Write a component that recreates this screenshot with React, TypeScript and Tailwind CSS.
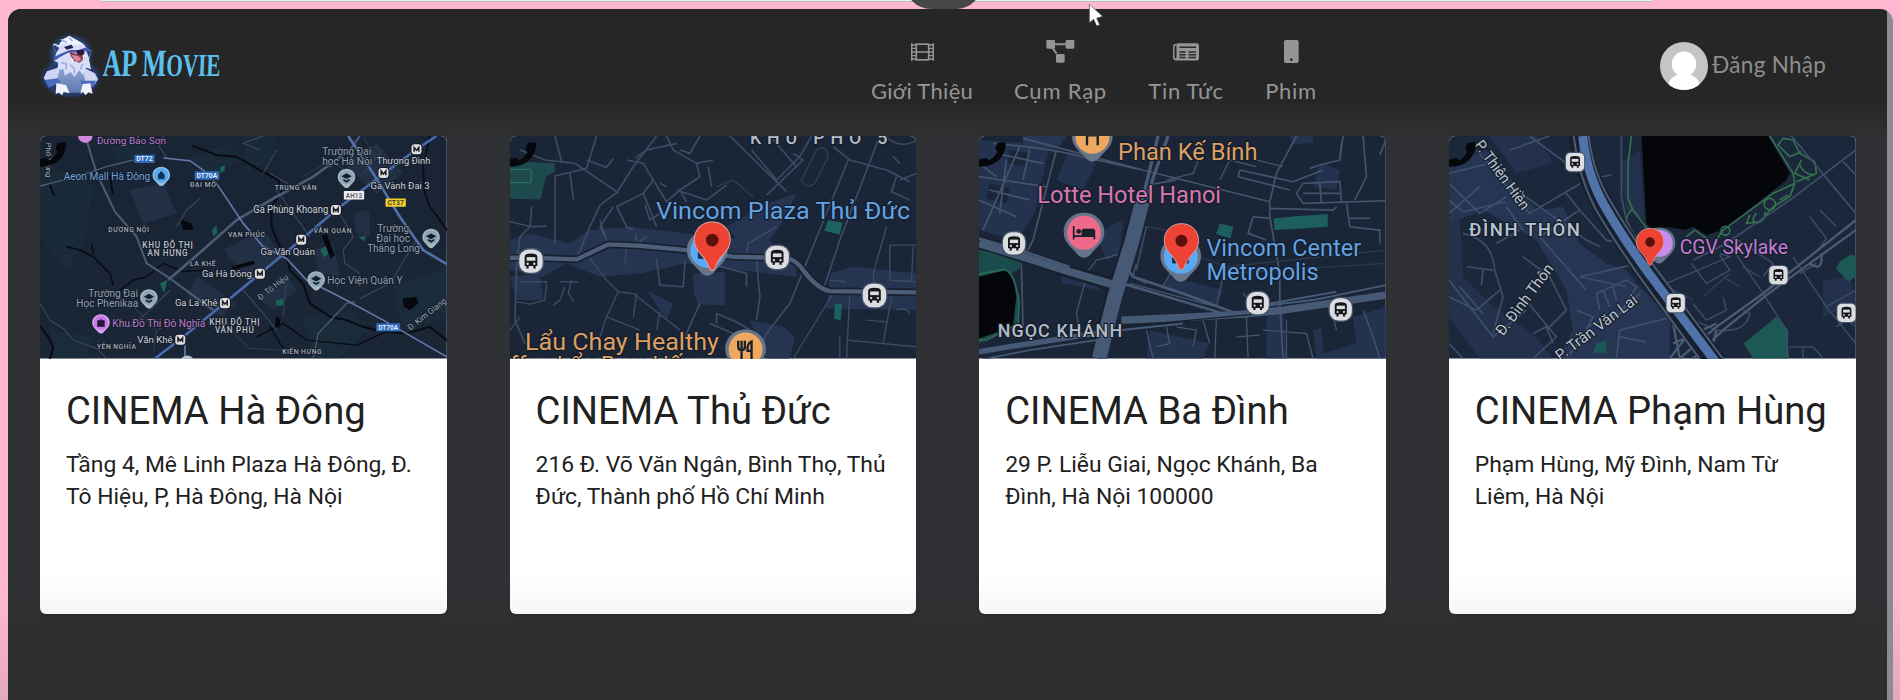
import React from "react";

type LabelProps = {
  x: number;
  y: number;
  s: number;
  c: string;
  w?: number;
  r?: number;
  bold?: boolean;
  children: string;
};

function Label({ x, y, s, c, w, r, bold, children }: LabelProps) {
  return (
    <text
      x={x}
      y={y}
      fontSize={s * 1.07}
      fill={c}
      textLength={w}
      lengthAdjust={bold ? "spacing" : "spacingAndGlyphs"}
      fontWeight={bold ? 500 : 400}
      stroke="#141d2b"
      strokeWidth={s > 40 ? 7 : 5}
      strokeLinejoin="round"
      paintOrder="stroke"
      transform={r ? `rotate(${r} ${x} ${y})` : undefined}
    >
      {children}
    </text>
  );
}

function Bus({ x, y, k = 1, square }: { x: number; y: number; k?: number; square?: boolean }) {
  return (
    <g transform={`translate(${x} ${y}) scale(${k})`}>
      <rect x="-39" y="-39" width="78" height="78" rx={square ? 20 : 32} fill="#46536a" />
      <rect x="-35" y="-35" width="70" height="70" rx={square ? 17 : 28} fill="#dcdde0" />
      <path d="M-19 -14Q-19 -23 0 -23Q19 -23 19 -14V15H14V22H7V15H-7V22H-14V15H-19Z" fill="#15171b" />
      <rect x="-13" y="-12" width="26" height="11" fill="#dcdde0" />
      <circle cx="-10" cy="8" r="3.5" fill="#dcdde0" />
      <circle cx="10" cy="8" r="3.5" fill="#dcdde0" />
    </g>
  );
}

function Metro({ x, y }: { x: number; y: number }) {
  return (
    <g transform={`translate(${x} ${y})`}>
      <rect x="-18" y="-18" width="36" height="36" rx="11" fill="#141a24" />
      <rect x="-15" y="-15" width="30" height="30" rx="9" fill="#dedede" />
      <path d="M-7 7V-6L0 3L7 -6V7" fill="none" stroke="#1c1f26" strokeWidth="4.5" />
    </g>
  );
}

function Pin({ x, y, k = 1, c, rim = "#66758a", children }: { x: number; y: number; k?: number; c: string; rim?: string; children?: React.ReactNode }) {
  return (
    <g transform={`translate(${x} ${y}) scale(${k})`}>
      <path d="M0 -60C35 -60 61 -34 61 -2C61 30 38 43 22 62Q0 88 -22 62C-38 43 -61 30 -61 -2C-61 -34 -35 -60 0 -60Z" fill={rim} />
      <circle r="51" fill={c} />
      {children}
    </g>
  );
}

function RedPin({ x, y, k = 1 }: { x: number; y: number; k?: number }) {
  return (
    <g transform={`translate(${x} ${y}) scale(${k})`}>
      <path
        d="M0 -54C32 -54 54 -31 54 -1C54 29 34 39 20 60C11 74 8 92 0 92C-8 92 -11 74 -20 60C-34 39 -54 29 -54 -1C-54 -31 -32 -54 0 -54Z"
        fill="#ed4335"
        stroke="#d9a5a3"
        strokeWidth="3"
      />
      <circle r="19" fill="#5c100c" />
    </g>
  );
}

function School({ x, y }: { x: number; y: number }) {
  return (
    <Pin x={x} y={y} k={0.43} c="#8fa6b5" rim="#a9bac4">
      <path d="M-36 -8L0 -28L36 -8L0 12ZM-22 10L0 22L22 10V24L0 37L-22 24Z" fill="#12202c" />
    </Pin>
  );
}

function Badge({ x, y, w, bg, fg, children }: { x: number; y: number; w: number; bg: string; fg: string; children: string }) {
  return (
    <g>
      <rect x={x} y={y} width={w} height="25" rx="2" fill={bg} />
      <text x={x + w / 2} y={y + 20} fontSize="21" fontWeight="600" textAnchor="middle" fill={fg} textLength={w - 12} lengthAdjust="spacingAndGlyphs">
        {children}
      </text>
    </g>
  );
}

function Handset() {
  return (
    <path
      d="M82 40L104 36Q109 37 108 48Q105 75 84 94Q62 110 34 110H24V90Q40 84 50 84L58 91Q73 84 83 65L77 57Z"
      fill="#05070a"
    />
  );
}

const mapClass = "block h-[222.500px] w-full";
const mapFont = "Roboto, 'Noto Sans', sans-serif";

function MapHaDong() {
  return (
    <svg className={mapClass} viewBox="30 18 1221 667" preserveAspectRatio="none" fontFamily={mapFont}>
      <rect x="30" y="18" width="1221" height="667" fill="#1a2536" />
      <g fill="#1a3a40" opacity=".3">
        <path d="M30 90L190 170L165 330L110 420L30 320ZM640 18H740L720 90L650 130ZM60 600L190 620L170 685H70ZM820 560L960 540L1010 600L930 685H850ZM470 90L590 40L640 80L560 140Z" />
        <path d="M1090 470L1251 410V560L1120 600ZM240 40L370 30L380 80L260 90Z" />
      </g>
      <g fill="#26344c" opacity=".75">
        <path d="M580 360L700 300L760 380L660 450ZM500 440L620 520L570 560L470 500ZM940 100L1040 40L1120 130L1040 190ZM970 250L1020 240L1020 320L980 310ZM850 360L910 340L930 440L870 430ZM300 180L400 160L440 250L340 280ZM680 500L770 430L800 480L730 540Z" />
      </g>
      <g fill="#1b6258">
        <path d="M545 300L560 285L562 310L550 318ZM870 360L892 345L900 365L884 382ZM390 460L412 450L402 490ZM570 112L585 106L584 124L572 128ZM738 510L762 506L760 525L740 528ZM985 320L1008 318L1004 334Z" />
      </g>
      <g fill="none" stroke="#080b12" strokeWidth="6" strokeLinecap="round">
        <path d="M490 48L560 75L620 80L690 120L745 150L755 185L725 230V290L745 340L770 380L780 420L820 460L840 520L900 560L950 570L1000 590L1040 600L1130 610L1200 590L1251 630" />
        <path d="M110 350L150 360L190 380L240 430L250 465M185 345L190 370" strokeWidth="5" />
        <path d="M520 420L460 425L400 400L375 420L350 440L310 450L270 480" strokeWidth="4" />
        <path d="M1200 18L1180 110L1185 190L1200 230L1230 270L1251 300" strokeWidth="5" />
        <path d="M32 590L55 620L70 650L60 685M240 140L248 190M60 165L72 195" />
        <path d="M680 620L760 580L830 630L980 645L1080 600M720 590L770 670" strokeWidth="4" />
      </g>
      <g fill="#06080d">
        <path d="M450 268L485 280L490 300L460 300ZM605 410L670 392L675 402L610 420ZM876 318L890 312L915 375L902 385ZM738 560L752 565L748 592L736 590ZM1118 505L1160 500L1165 520L1140 540L1122 530Z" />
      </g>
      <g fill="none" stroke="#3e4c65" strokeWidth="3">
        <path d="M30 520L60 570L100 595L130 630L200 655L230 685M640 480L700 550L740 600M930 250L970 320L940 360L945 400L990 430M1160 330L1080 460L990 505M720 130L790 170M740 180L840 320M400 18L388 50L412 85M700 18L640 40L690 60M740 60L700 130M510 205L470 240L440 290M300 590L360 540L420 480" />
        <path d="M1060 60L1000 130M820 140L900 90L960 130M1000 20L1040 90M770 450L760 560M570 545L620 620L660 655L850 665M300 520L380 600L370 660" strokeWidth="2" />
      </g>
      <g fill="none" stroke="#4c5b76" strokeWidth="6">
        <path d="M170 30L200 130L255 245L320 320L350 400L420 445L550 540" />
        <path d="M30 168L140 140L230 110L310 90M850 685L865 610L950 520L975 515" strokeWidth="4" />
        <path d="M415 450L530 350L620 270L740 200L850 140L960 60" strokeWidth="8" />
        <path d="M960 60L990 18" />
      </g>
      <g fill="none" stroke="#6478ab" strokeWidth="5">
        <path d="M400 84L480 92L540 135L570 175L640 280L700 350L770 385L830 450L930 500L1060 570L1251 680" />
        <path d="M375 685L450 628L585 518L690 431L814 329L918 240L1030 155L1160 58L1220 18" stroke="#4a69ad" strokeWidth="8" />
        <path d="M955 18L1030 130L1110 260L1180 360L1251 402" stroke="#5070a8" strokeWidth="8" />
        <path d="M465 620V685" />
      </g>
      <Badge x={313} y={74} w={61} bg="#2d6ab8" fg="#eaf2ff">DT72</Badge>
      <Badge x={494} y={124} w={74} bg="#2d6ab8" fg="#eaf2ff">DT70A</Badge>
      <Badge x={1039} y={579} w={72} bg="#2d6ab8" fg="#eaf2ff">DT70A</Badge>
      <Badge x={942} y={183} w={61} bg="#eeeeee" fg="#555b66">AH13</Badge>
      <Badge x={1067} y={205} w={61} bg="#efcf30" fg="#3b3820">CT37</Badge>
      <Label x={200} y={41} s={27} w={208} c="#bd7bc9">Đường Bảo Sơn</Label>
      <Label x={101} y={150} s={28} w={260} c="#6ba4da">Aeon Mall Hà Đông</Label>
      <Label x={480} y={171} s={19} w={78} bold c="#a8afb8">ĐẠI MỖ</Label>
      <Label x={735} y={181} s={19} w={125} bold c="#a8afb8">TRUNG VĂN</Label>
      <Label x={235} y={306} s={19} w={122} bold c="#a8afb8">DƯƠNG NỘI</Label>
      <Label x={594} y={322} s={19} w={111} bold c="#a8afb8">VẠN PHÚC</Label>
      <Label x={851} y={309} s={19} w={114} bold c="#a8afb8">VĂN QUÁN</Label>
      <Label x={337} y={355} s={23} w={152} bold c="#bcc1c8">KHU ĐÔ THỊ</Label>
      <Label x={353} y={378} s={23} w={120} bold c="#bcc1c8">AN HƯNG</Label>
      <Label x={480} y={409} s={19} w={77} bold c="#a8afb8">LA KHÊ</Label>
      <Label x={538} y={584} s={23} w={151} bold c="#bcc1c8">KHU ĐÔ THỊ</Label>
      <Label x={555} y={608} s={23} w={117} bold c="#bcc1c8">VĂN PHÚ</Label>
      <Label x={201} y={657} s={19} w={117} bold c="#a8afb8">YÊN NGHĨA</Label>
      <Label x={757} y={671} s={19} w={118} bold c="#a8afb8">KIẾN HƯNG</Label>
      <Label x={877} y={74} s={28} w={147} c="#929fac">Trường Đại</Label>
      <Label x={877} y={104} s={28} w={150} c="#929fac">học Hà Nội</Label>
      <Label x={1041} y={103} s={27} w={161} c="#d0d3d7">Thượng Đình</Label>
      <Label x={1022} y={177} s={27} w={177} c="#d0d3d7">Ga Vành Đai 3</Label>
      <Label x={670} y={250} s={28} w={225} c="#d0d3d7">Ga Phùng Khoang</Label>
      <Label x={692} y={375} s={27} w={163} c="#d0d3d7">Ga Văn Quán</Label>
      <Label x={516} y={440} s={27} w={150} c="#d0d3d7">Ga Hà Đông</Label>
      <Label x={435} y={529} s={27} w={128} c="#d0d3d7">Ga La Khê</Label>
      <Label x={322} y={638} s={27} w={106} c="#d0d3d7">Văn Khê</Label>
      <Label x={1042} y={306} s={28} w={96} c="#929fac">Trường</Label>
      <Label x={1039} y={336} s={28} w={102} c="#929fac">Đại học</Label>
      <Label x={1012} y={367} s={28} w={158} c="#929fac">Thăng Long</Label>
      <Label x={892} y={462} s={28} w={226} c="#929fac">Học Viện Quân Y</Label>
      <Label x={175} y={501} s={28} w={149} c="#929fac">Trường Đại</Label>
      <Label x={139} y={532} s={28} w={186} c="#929fac">Học Phenikaa</Label>
      <Label x={247} y={590} s={28} w={279} c="#bd7bc9">Khu Đô Thị Đô Nghĩa</Label>
      <Label x={692} y={512} s={24} w={108} r={-38} c="#9aa6b4">Đ. Tô Hiệu</Label>
      <Label x={1141} y={602} s={24} w={140} r={-38} c="#9aa6b4">Đ. Kim Giang</Label>
      <Label x={48} y={38} s={22} w={104} r={90} c="#aab0b8">Phố Trung</Label>
      <Metro x={1160} y={58} />
      <Metro x={1061} y={129} />
      <Metro x={918} y={240} />
      <Metro x={814} y={329} />
      <Metro x={690} y={431} />
      <Metro x={585} y={519} />
      <Metro x={451} y={629} />
      <School x={950} y={142} />
      <School x={1204} y={322} />
      <School x={859} y={449} />
      <School x={357} y={503} />
      <Pin x={394} y={136} k={0.43} c="#5aa8ec" rim="#8fc0ea">
        <path d="M-20 -8H20V24H-20ZM-11 -8Q-11 -25 0 -25Q11 -25 11 -8" fill="#12304f" stroke="#12304f" strokeWidth="6" />
      </Pin>
      <Pin x={213} y={578} k={0.43} c="#c67bea" rim="#d9a6ee">
        <path d="M-22 -14H22V24H-22ZM0 -30V-10" fill="#2b1238" stroke="#2b1238" strokeWidth="7" />
      </Pin>
      <circle cx="166" cy="17" r="22" fill="#cf86dd" />
      <circle cx="472" cy="697" r="21" fill="#b6c4d2" />
      <Handset />
    </svg>
  );
}

function MapThuDuc() {
  return (
    <svg className={mapClass} viewBox="30 18 1221 667" preserveAspectRatio="none" fontFamily={mapFont}>
      <rect x="30" y="18" width="1221" height="667" fill="#1a2537" />
      <g fill="#253551">
        <path d="M30 330L90 310L210 340L270 300L390 290L560 310L660 320L810 330L840 370L890 400V440L800 430L560 400L420 430L300 440L200 400L130 440L30 420Z" />
        <path d="M580 430L675 425V525L595 522L582 490ZM680 290L800 220L890 190L840 290L800 340L720 340ZM750 570L850 590L885 620L870 685H800ZM990 430L1060 410L1251 430V540L980 535ZM30 440L120 430L130 510L50 510ZM440 480L520 520L500 570Z" />
      </g>
      <g fill="#1c4a4d">
        <path d="M30 92L165 100V125L138 140L122 208L30 206Z" />
        <path d="M985 270L1028 278L1020 313L973 302ZM1005 520L1027 522L1022 570L1003 566Z" fill="#1c6260" />
      </g>
      <rect x="28" y="118" width="66" height="40" rx="8" fill="none" stroke="#2d6f6b" strokeWidth="4" />
      <g fill="none" stroke="#3e4b64" strokeWidth="5" strokeLinejoin="round">
        <path d="M60 60L135 90L225 100L355 188M165 18L185 95M290 18L260 115L165 138V340M260 90L320 112L340 85M210 130L220 208M470 18L400 110L350 188L300 225L270 290L230 385M380 90L430 100L460 150L430 190L350 230L380 290L400 300" />
        <path d="M405 85L440 60L530 40M500 18L520 60L590 100L600 140L540 180L560 215M530 180L620 210L680 165M600 18L570 70L540 60M625 110L635 170M640 90L590 100M460 150L500 215L540 180M430 190L470 290M435 225L450 270L480 250M480 160L500 170M340 230L300 290L320 330L300 270M410 310L405 345L440 320" />
        <path d="M690 18L860 185M755 60L830 150L900 80L935 18M810 18L890 110M880 70L910 90L800 195M1045 90L870 520L800 610L770 685M1140 18L1020 330L970 480M1000 50L1050 90L1160 120L1230 155M1190 140L1175 185L1230 210M1200 150L1251 130M1180 80L1200 100" />
        <path d="M30 275L95 290L140 288M95 230L90 290L60 320L50 400L45 570L75 640M470 385L480 465L550 470L555 395M570 385L740 430L740 470M740 370L745 340L830 290M770 390L780 500L770 570M630 580L770 640M650 550L720 580L780 620M650 550V580M600 520L555 620" />
        <path d="M60 455H140L135 510L90 522L50 515M215 450L205 490L222 515M195 470L180 510L160 525M235 455H180M270 385L320 450L355 485L320 560L300 620M350 485L400 490L540 600M410 490L400 560M480 545L470 600M320 560L420 600M380 350L375 400M1160 290L1120 430L1125 480M1170 345H1251M1170 345V450L1251 455M1240 350L1235 455M990 450L1040 455M1000 490L880 685M1050 490L1040 685M1175 500L1150 640M1040 630L1251 650M1100 570L1160 575M1190 540Q1220 530 1230 550M1020 620V685M30 600L60 560" strokeWidth="4" />
        <path d="M905 150L950 60Q980 40 985 80L945 160Q920 180 905 150ZM650 170L700 150L760 200M370 400L390 420" stroke="#303d54" strokeWidth="4" />
        <path d="M1160 20Q1200 60 1251 30" strokeWidth="4" />
      </g>
      <path d="M30 383H90L230 388L325 343L420 347L560 360L700 380L860 384Q890 390 910 420Q950 475 990 483L1251 487" fill="none" stroke="#18202e" strokeWidth="23" />
      <path d="M30 383H90L230 388L325 343L420 347L560 360L700 380L860 384Q890 390 910 420Q950 475 990 483L1251 487" fill="none" stroke="#4d5e79" strokeWidth="13" />
      <Bus x={93} y={393} />
      <Bus x={832} y={382} />
      <Bus x={1124} y={496} />
      <Label x={750} y={42} s={50} w={413} bold c="#b4bac3">KHU PHỐ 5</Label>
      <Label x={468} y={267} s={68} w={763} c="#63a3e2">Vincom Plaza Thủ Đức</Label>
      <Pin x={622} y={362} c="#5aa9f5">
        <path d="M-28 -6H26V24H-28Z" fill="#15304f" />
      </Pin>
      <RedPin x={637} y={330} />
      <Pin x={737} y={658} c="#eea85f">
        <path d="M-22 -26V-8Q-22 2 -12 3V34M-12 -26V0M-2 -26V-8Q-2 2 -12 3M18 34V-24Q4 -18 6 4H18" fill="none" stroke="#18202c" strokeWidth="7" />
      </Pin>
      <Label x={75} y={659} s={66} w={582} c="#dda062">Lẩu Chay Healthy</Label>
      <Label x={30} y={728} s={66} w={555} c="#dda062">ffee Lẩu Bow Hấp</Label>
      <Handset />
    </svg>
  );
}

function MapBaDinh() {
  return (
    <svg className={mapClass} viewBox="28 18 1220 667" preserveAspectRatio="none" fontFamily={mapFont}>
      <rect x="28" y="18" width="1220" height="667" fill="#1a2537" />
      <g fill="#263755">
        <path d="M28 30L240 45L195 250L140 330L28 300ZM300 60L380 100L340 180L260 150ZM380 310L460 270L450 370L410 390ZM270 430L350 415L390 480L280 460ZM600 440L760 480L735 530L575 475ZM890 560L940 540L950 685H890ZM1030 600L1248 530V685H1040ZM540 600L720 640L700 685H530ZM960 18H1030V40L970 42ZM1050 100L1110 120L1100 180L1030 170Z" opacity=".8" />
        <path d="M160 18H290L260 60L160 45Z" />
      </g>
      <g fill="#1a2537">
        <path d="M1055 580L1150 565L1160 640L1060 670ZM120 60L180 70L170 110L115 100ZM60 160L120 175L110 220L50 205Z" />
      </g>
      <path d="M28 360L155 385L150 415L125 430L150 500L145 580L28 640Z" fill="#1a4c4e" />
      <path d="M28 440L110 420Q130 430 140 500L130 590L28 625Z" fill="#04060b" />
      <path d="M28 432L105 418Q138 430 148 520L145 580L50 630L28 630" fill="none" stroke="#296a55" strokeWidth="5" />
      <path d="M750 280L791 290L782 325L739 312ZM912 265L985 258L1074 252V290L990 296L914 300Z" fill="#1c5f5e" />
      <g fill="none" stroke="#45546d" strokeWidth="5" strokeLinejoin="round">
        <path d="M260 60L190 330L155 400L160 590M70 40L170 50L270 65L540 125L700 165L900 215M160 25L520 120M150 50L40 300M28 140L230 170M80 70L220 100M110 90L90 250M180 55L160 150M28 210L140 260M60 180L180 210M28 100L80 140" />
        <path d="M980 18L920 130L900 215V260L930 430V520L940 685M810 120L970 155L1060 120M810 120L805 140L960 180M1020 115L1050 105L1110 90L1115 40M1120 18L1110 90M980 190L1000 160L1110 155L1115 215M980 190L1000 220L1248 212M1050 160L1055 220M1000 190H1110M900 235L1090 240L1100 230M1130 220L1140 290L1230 300V340M1140 265H1200M1155 210L1190 140L1180 18M1248 30L1230 75M850 260L835 310L890 330M850 260L900 265" />
        <path d="M590 150L670 130L690 80M750 150L780 90L860 110M860 90L940 110M350 440L320 550L330 600M350 430L380 390L500 360M500 400L490 440L530 460M530 290L500 420M620 400L575 475M760 440L740 530M820 490L850 520M480 460L740 530M530 600L550 685M590 590L600 640L560 650M620 590L680 600L670 650M740 560L735 685M830 560L835 685M800 620L870 615M700 570L720 640M880 600L1010 610L1030 685M950 570V685M1090 560L1100 600M1180 540L1210 620L1230 685" strokeWidth="4" />
        <path d="M530 290L590 300M690 380L770 410L1248 360M770 430L1248 400" stroke="#2c3a51" strokeWidth="4" />
      </g>
      <g fill="none" stroke="#18202e" strokeLinejoin="round">
        <path d="M28 335L160 378L300 425L420 460" strokeWidth="40" />
        <path d="M515 220L485 330L430 500L385 685" strokeWidth="50" />
      </g>
      <g fill="none" stroke="#465a75" strokeLinejoin="round">
        <path d="M28 340L160 380L300 425L425 462" strokeWidth="24" />
        <path d="M28 325L160 363L300 410" strokeWidth="7" />
        <path d="M518 215L485 340L435 500L388 685" strokeWidth="44" />
        <path d="M565 18L535 140L515 220" strokeWidth="10" />
        <path d="M595 18L555 130L525 220" strokeWidth="10" />
        <path d="M470 410L490 440L640 490L800 550" strokeWidth="8" />
        <path d="M440 455L560 490L760 550" strokeWidth="8" />
        <path d="M455 570L640 562L820 552L940 540L1248 495" strokeWidth="22" />
        <path d="M450 600L640 580M860 530L1040 508L1248 465M900 520L1100 485" strokeWidth="6" />
        <path d="M28 665L130 648L380 610" strokeWidth="16" />
        <path d="M28 690L180 660L380 630M535 165L620 150" strokeWidth="5" />
      </g>
      <path d="M455 590L640 572L860 552" fill="none" stroke="#18202e" strokeWidth="4" />
      <Bus x={133} y={340} k={0.95} />
      <Bus x={864} y={519} k={0.95} />
      <Bus x={1113} y={538} k={0.95} />
      <Pin x={368} y={20} c="#eea85f">
        <path d="M-16 -10V26M16 -10V26M-16 -4H16" fill="none" stroke="#18202c" strokeWidth="7" />
      </Pin>
      <Pin x={343} y={308} c="#ee6a8b">
        <path d="M-31 -20V20M-31 10H31M31 20V-6H-5V10" fill="none" stroke="#18202c" strokeWidth="5" />
        <rect x="-5" y="-12" width="36" height="22" fill="#18202c" />
        <circle cx="-16" cy="-4" r="7" fill="#18202c" />
      </Pin>
      <Pin x={633} y={380} c="#5aa9f5">
        <path d="M-26 2H24V20H-26Z" fill="#15304f" />
      </Pin>
      <RedPin x={635} y={332} k={0.95} />
      <Label x={445} y={89} s={66} w={418} c="#dda062">Phan Kế Bính</Label>
      <Label x={203} y={220} s={66} w={551} c="#d877ae">Lotte Hotel Hanoi</Label>
      <Label x={710} y={379} s={66} w={464} c="#63a3e2">Vincom Center</Label>
      <Label x={710} y={450} s={66} w={337} c="#63a3e2">Metropolis</Label>
      <Label x={84} y={621} s={50} w={373} bold c="#b4bac3">NGỌC KHÁNH</Label>
      <Handset />
    </svg>
  );
}

function MapPhamHung() {
  return (
    <svg className={mapClass} viewBox="28 18 1220 667" preserveAspectRatio="none" fontFamily={mapFont}>
      <rect x="28" y="18" width="1220" height="667" fill="#1b273a" />
      <g fill="#253553">
        <path d="M28 100L140 60L290 240L370 230L420 340L500 400L560 420L600 470L690 560V685H350L400 600L380 480L290 330L130 240L28 280Z" />
        <path d="M28 280L60 260L70 440L150 520L290 620L340 685H120L28 560ZM540 100L600 60L615 270L560 240ZM1150 450L1230 440L1248 520L1150 560ZM150 18H290L340 100L230 130Z" opacity=".8" />
      </g>
      <path d="M605 18H985L1050 130L1040 150L850 300L800 315L760 290L735 300L680 290L650 310L620 280Z" fill="#04060a" />
      <path d="M1200 395L1235 372L1248 380V440L1225 455L1188 415ZM1010 560L1045 600V685H940L912 640ZM470 640L500 630V670L460 668Z" fill="#1c5955" />
      <g fill="none" stroke="#35704f" strokeWidth="5" strokeLinejoin="round">
        <path d="M575 18L565 100V205L580 240L625 300L700 330M580 235Q550 260 565 300L600 330M990 18L1060 130L1065 160L1000 190L850 300L830 330M1070 155L1130 130L1125 95L1080 70L1060 30L1030 25L1015 45L1050 80L1085 65M1085 90L1065 130L1110 150M1000 230L1050 200L1065 160M930 255L920 280L960 275L1000 230M950 250Q930 270 950 280Q980 270 975 245M1020 210L1045 195" />
        <circle cx="990" cy="222" r="17" />
        <circle cx="857" cy="302" r="13" />
        <path d="M740 320L765 300L800 325M1080 105Q1090 130 1120 135" />
      </g>
      <g fill="none" stroke="#3f4f6b" strokeWidth="5" strokeLinejoin="round">
        <path d="M1055 18L1248 250M1248 60L1050 210L860 340L760 390M1210 95L1248 135M545 18V200L560 270L600 350M110 60L270 250L440 150L515 135M210 60L330 18M28 210L70 245L200 215M28 250L120 170M28 160L120 250L200 200M28 130L150 100M270 18L380 100L440 150M230 180L440 330L480 350M380 190L420 240L300 320L440 480M420 240L500 330L540 340" />
        <path d="M70 310Q160 330 165 420L190 500L160 610M80 410L160 420M130 420L125 465M170 340L240 300M250 300L200 230M250 380L330 440L380 540L320 600M28 450L160 620L260 540M28 500L110 540L180 480M60 470L130 550M280 610L320 590L340 640M28 640L70 685M250 500L350 620L280 685M420 440L560 470M420 440L600 400M470 490L560 450L590 470L540 550L440 590M470 490L480 540M490 480L510 530M520 470L530 510M540 550L600 490M700 560L540 600L530 685M540 620L620 635M410 540L460 560L430 620L380 685" />
        <path d="M640 400L680 460L870 380L840 370M755 400L800 460L870 420L840 375M880 360L970 490L1040 600L1045 685M910 410L960 440M1060 380L1160 530L1248 640M1110 260L1160 325L1135 360M1140 240L1190 290M1000 400L880 320M1130 400L1080 430M760 520L800 570L860 540L850 500M740 560L830 600M830 600Q920 610 930 550L910 540M970 440L1000 400M1050 650H1120L1150 685M1090 650V685M1190 590L1220 570L1248 590M1160 530L1248 480" strokeWidth="4" />
        <path d="M790 500L870 430M900 470L850 440M680 470L760 510" stroke="#2c3b53" />
      </g>
      <g fill="none" stroke="#4c5b75" strokeWidth="7">
        <path d="M1248 270L970 490L830 590L720 685M1248 300L1110 400L980 495L850 600L760 685" />
        <path d="M1110 400Q1150 430 1145 370M700 580L720 685M830 600L810 685M700 640L830 580M690 685L740 620" />
      </g>
      <g fill="none">
        <path d="M418 18Q435 130 490 225Q555 340 660 480L830 700" stroke="#18202e" strokeWidth="66" />
        <path d="M402 18Q415 135 465 232Q530 345 638 493L790 700M447 18Q460 130 515 218Q580 330 690 470L860 700" stroke="#4a5a74" strokeWidth="6" />
        <path d="M429 18Q440 130 493 225Q558 340 665 480L835 705" stroke="#5074aa" strokeWidth="27" />
      </g>
      <Bus x={406} y={96} k={0.78} square />
      <Bus x={1016} y={435} k={0.78} square />
      <Bus x={708} y={519} k={0.78} square />
      <Bus x={1220} y={548} k={0.78} square />
      <Pin x={658} y={340} k={0.8} c="#c98bf0" />
      <RedPin x={631} y={336} k={0.76} />
      <Label x={88} y={317} s={52} w={333} bold c="#b9c2cf">ĐÌNH THÔN</Label>
      <Label x={720} y={371} s={56} w={325} c="#c27bd2">CGV Skylake</Label>
      <Label x={103} y={45} s={43} w={245} r={54} c="#bcc4ce">P. Thiên Hiền</Label>
      <Label x={190} y={620} s={43} w={256} r={-53} c="#bcc4ce">Đ. Đình Thôn</Label>
      <Label x={362} y={693} s={43} w={294} r={-37} c="#bcc4ce">P. Trần Văn Lai</Label>
      <Handset />
    </svg>
  );
}

function Mascot() {
  return (
    <svg className="h-[66px] w-[66px] shrink-0" viewBox="113 98 198 198">
      <defs>
        <radialGradient id="glow">
          <stop offset=".72" stopColor="#2f62b4" stopOpacity=".6" />
          <stop offset="1" stopColor="#1b3d70" stopOpacity="0" />
        </radialGradient>
        <linearGradient id="belly" x1="0" y1="0" x2="0" y2="1">
          <stop offset="0" stopColor="#8fa3d2" />
          <stop offset="1" stopColor="#5f78ae" />
        </linearGradient>
      </defs>
      <ellipse cx="212" cy="165" rx="72" ry="66" fill="url(#glow)" />
      <ellipse cx="211" cy="234" rx="97" ry="66" fill="url(#glow)" />
      <path d="M165 195L137 214L125 236L138 262L166 284L205 287L248 287L280 270L297 240L288 218L262 200L240 190Z" fill="#26376e" />
      <path d="M172 205L140 216L130 236L146 258L180 250L190 215ZM254 207L284 222L293 240L278 262L240 254L236 220Z" fill="#cdd5f2" />
      <path d="M178 208L245 208L255 245L240 280H190L170 246Z" fill="url(#belly)" />
      <path d="M133 242L172 237L182 248L146 265ZM240 244L287 244L278 263L248 260Z" fill="#4b69bd" />
      <path d="M168 252L197 257L208 282L190 277L186 288L176 280L166 284ZM247 254L270 252L277 283L264 279L256 288L248 278L240 283Z" fill="#f1f1fb" />
      <path d="M158 140L160 132L176 138L186 121L175 121L200 117L207 109L217 118L229 122L250 135L262 150L273 154L266 180L272 210L257 205L247 226L237 213L222 232L211 218L193 229L190 210L171 210L174 190L161 184L168 160Z" fill="#d8def8" />
      <path d="M176 138L186 121L207 109L229 122L250 135L213 136L195 130Z" fill="#f3f4ff" />
      <path d="M158 140L163 137L177 146L168 160ZM256 150L273 155L266 176Z" fill="#2c3f86" />
      <path d="M159 174Q190 158 213 151L232 153L261 143L263 154L229 160L211 157Q180 170 163 184Z" fill="#3d5bb9" />
      <path d="M191 143L214 136L219 145L199 151Z" fill="#192247" />
      <path d="M205 154L228 163L249 161L253 177L238 190L218 184Z" fill="#8c3f5b" />
      <path d="M213 166L235 171L243 181L228 188Z" fill="#dd8898" />
      <path d="M228 153L249 151L253 162L240 169L230 163Z" fill="#321a37" />
      <path d="M211 176L217 190L220 179ZM247 168L249 184L254 168Z" fill="#fff" />
      <path d="M183 190L198 194L197 211M211 197L222 208L222 223M247 194L240 211M183 124L200 128M207 115L216 125" fill="none" stroke="#9eaddf" strokeWidth="5" />
    </svg>
  );
}

function FilmIcon() {
  return (
    <svg className="h-[18px] w-[23px]" viewBox="213 128 69 52" fill="none" stroke="currentColor">
      <rect x="229" y="130.500" width="37" height="47" strokeWidth="5" />
      <path d="M229 154H266M215 128V180M280 128V180" strokeWidth="5" />
      <path d="M213 133H229M213 143H229M213 154H229M213 165H229M213 175H229M266 133H282M266 143H282M266 154H282M266 165H282M266 175H282" strokeWidth="4" />
    </svg>
  );
}

function DiagramIcon() {
  return (
    <svg className="h-[23px] w-[29px]" viewBox="620 120 87 69" fill="currentColor">
      <rect x="621" y="120" width="26" height="26" rx="4" />
      <rect x="679" y="120" width="26" height="26" rx="4" />
      <rect x="650" y="162" width="26" height="26" rx="4" />
      <path d="M645 133H682M638 142L652 161" fill="none" stroke="currentColor" strokeWidth="6" />
    </svg>
  );
}

function NewsIcon() {
  return (
    <svg className="h-[18px] w-[26px]" viewBox="1001 128 78 53">
      <rect x="1010" y="128" width="69" height="52" rx="7" fill="currentColor" />
      <path d="M1010 133H1007Q1003 135 1003 140V170Q1004 178 1014 178" fill="none" stroke="currentColor" strokeWidth="5" />
      <path d="M1010 136V172" stroke="#2a2a2a" strokeWidth="3" />
      <path d="M1020 140H1070M1020 154.500H1039M1047 154.500H1070M1020 162.500H1039M1047 162.500H1070M1020 171H1039M1047 171H1070" stroke="#2a2a2a" strokeWidth="4.500" />
    </svg>
  );
}

function PhoneIcon() {
  return (
    <svg className="h-[23px] w-[15px]" viewBox="1332 120 45 69" fill="currentColor">
      <rect x="1332" y="120" width="44" height="69" rx="6" />
      <circle cx="1354" cy="179" r="4" fill="#262626" />
    </svg>
  );
}

const nav = [
  { label: "Giới Thiệu", icon: <FilmIcon />, box: "w-[102px]", font: "tracking-[0.3px]" },
  { label: "Cụm Rạp", icon: <DiagramIcon />, box: "w-[93px]", font: "tracking-[0.8px]" },
  { label: "Tin Tức", icon: <NewsIcon />, box: "w-[76px]", font: "tracking-[0.7px]" },
  { label: "Phim", icon: <PhoneIcon />, box: "w-[52px]", font: "tracking-[0.7px]" },
];

const cinemas = [
  { name: "CINEMA Hà Đông", lines: ["Tầng 4, Mê Linh Plaza Hà Đông, Đ.", "Tô Hiệu, P, Hà Đông, Hà Nội"], map: <MapHaDong /> },
  { name: "CINEMA Thủ Đức", lines: ["216 Đ. Võ Văn Ngân, Bình Thọ, Thủ", "Đức, Thành phố Hồ Chí Minh"], map: <MapThuDuc /> },
  { name: "CINEMA Ba Đình", lines: ["29 P. Liễu Giai, Ngọc Khánh, Ba", "Đình, Hà Nội 100000"], map: <MapBaDinh /> },
  { name: "CINEMA Phạm Hùng", lines: ["Phạm Hùng, Mỹ Đình, Nam Từ", "Liêm, Hà Nội"], map: <MapPhamHung /> },
];

export default function App() {
  return (
    <div className="relative h-[700px] w-[1900px] overflow-hidden bg-linear-to-b from-[#ffb7d0] from-85% to-[#e3a8c0] pt-[9px] pr-[7px] pl-2 font-['Roboto','Noto_Sans',sans-serif]">
      <div className="absolute top-0 left-[101px] h-[2px] w-[1552px] rounded-b-full border-b border-[#b9bcc4] bg-[#e6f3f6]" />
      <div className="absolute -top-[56px] left-[905px] h-[65px] w-[77px] rounded-[26px] bg-[#474747]" />

      <div className="flex h-[691px] overflow-hidden rounded-t-[13px] bg-[#8c8b8f]">
        <main className="flex h-full w-[1879px] flex-col rounded-t-[13px] bg-linear-to-b from-[#303135] from-82% to-[#2d2d2d] to-94%">
          <header className="flex h-[127px] shrink-0 items-start bg-linear-to-b from-[#262626] from-72% to-[#303033]">
            <div className="flex w-[863px] items-center pt-[23px] pl-[30px]">
              <Mascot />
              <span className="-mt-[4px] -ml-px inline-block origin-left scale-x-[0.755] scale-y-[1.14] -skew-x-3 whitespace-nowrap font-['Liberation_Serif',serif] text-[34px] leading-none font-bold text-[#5cc0ee] uppercase">
                AP M<span className="text-[28px]">ovie</span>
              </span>
            </div>
            <nav className="flex w-[789px] gap-[41px] pt-[27px] text-[#959595]">
              {nav.map((item) => (
                <a key={item.label} className={`flex flex-col items-center ${item.box}`}>
                  <span className="flex h-[31px] items-center">{item.icon}</span>
                  <span className={`mt-[9px] whitespace-nowrap font-['Lato','Open_Sans',sans-serif] text-[22px] leading-[30px] ${item.font}`}>
                    {item.label}
                  </span>
                </a>
              ))}
            </nav>
            <div className="flex items-center gap-1 pt-[33px]">
              <svg className="h-12 w-12" viewBox="0 0 48 48">
                <defs>
                  <clipPath id="avatar">
                    <circle cx="24" cy="24" r="24" />
                  </clipPath>
                </defs>
                <g clipPath="url(#avatar)">
                  <rect width="48" height="48" fill="#c5c5c5" />
                  <ellipse cx="24" cy="22" rx="12.300" ry="12.500" fill="#fff" />
                  <ellipse cx="24" cy="45" rx="16" ry="13.500" fill="#fff" />
                </g>
              </svg>
              <span className="-mt-[3px] whitespace-nowrap font-['Lato','Open_Sans',sans-serif] text-[22.500px] leading-[30px] tracking-[0.3px] text-[#8e8e8e]">
                Đăng Nhập
              </span>
            </div>
          </header>

          <section className="flex gap-[62.800px] pl-[32px]">
            {cinemas.map((cinema) => (
              <article key={cinema.name} className="h-[477.500px] w-[406.800px] shrink-0 overflow-hidden rounded-md bg-linear-to-b from-white from-92% to-[#f7f7f7] shadow-sm">
                {cinema.map}
                <div className="px-[26px] pt-[29px] text-[#212121]">
                  <h2 className="text-[38.200px] leading-[47px] whitespace-nowrap">{cinema.name}</h2>
                  <p className="mt-[14px] text-[22.850px] leading-[32px] whitespace-nowrap">
                    {cinema.lines[0]}
                    <br />
                    {cinema.lines[1]}
                  </p>
                </div>
              </article>
            ))}
          </section>
        </main>
      </div>

      <svg className="absolute top-[3px] left-[1088px] h-[25px] w-[18px]" viewBox="745 9 54 75">
        <path d="M749 13V68L762 58L771 78L780 74L771 55L789 49Z" fill="#fff" stroke="#55454d" strokeWidth="2" />
      </svg>
    </div>
  );
}
